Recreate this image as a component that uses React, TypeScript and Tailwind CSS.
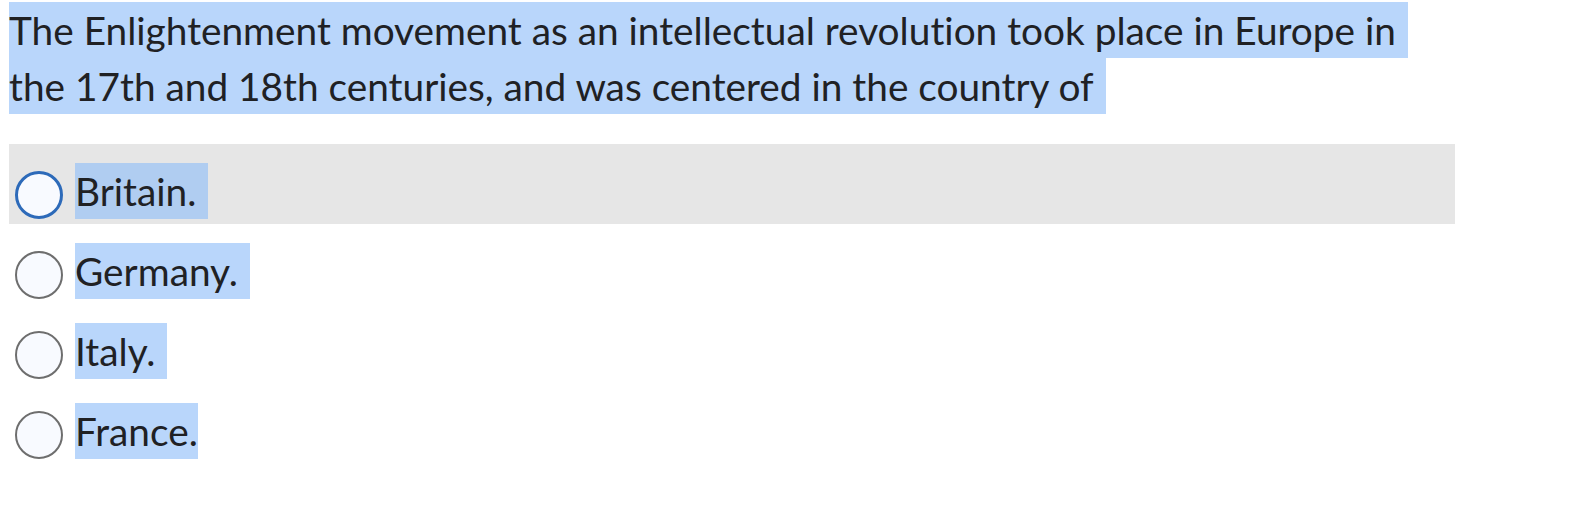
import React from "react";

type Choice = { label: string; trail: boolean; focused?: boolean };

const choices: Choice[] = [
  { label: "Britain.", trail: true, focused: true },
  { label: "Germany.", trail: true },
  { label: "Italy.", trail: true },
  { label: "France.", trail: false },
];

function Radio({ focused }: { focused?: boolean }) {
  return (
    <span
      className={
        focused
          ? "mt-[8px] block h-[48px] w-[48px] shrink-0 rounded-full border-[3px] border-[#2d6ab9] bg-[#f8faff]"
          : "mt-[8px] block h-[48px] w-[48px] shrink-0 rounded-full border-2 border-[#6e6e6e] bg-[#f8faff]"
      }
    />
  );
}

export default function App() {
  return (
    <div
      className="min-h-[506px] w-[1584px] bg-white pt-[2px] text-[#202124]"
      style={{ fontFamily: "Lato, 'Noto Sans', sans-serif", fontVariantLigatures: "none" }}
    >
      <div className="ml-[9px] text-[38.8px] leading-[56px]">
        <div className="w-fit bg-[#b9d6fb] pr-[12px]">
          The Enlightenment movement as an intellectual revolution took place in Europe in
        </div>
        <div className="w-fit bg-[#b9d6fb] pr-[12px]">
          the 17th and 18th centuries, and was centered in the country of
        </div>
      </div>

      <div className="ml-[9px] mt-[30px] flex w-[1446px] flex-col">
        {choices.map((c) => (
          <div
            key={c.label}
            className={
              c.focused
                ? "flex h-[80px] items-start gap-[12px] bg-[#e6e6e6] pl-[6px] pt-[19px]"
                : "flex h-[80px] items-start gap-[12px] pl-[6px] pt-[19px]"
            }
          >
            <Radio focused={c.focused} />
            <span
              className={
                (c.focused ? "bg-[#b0cdf1] " : "bg-[#b9d6fb] ") +
                (c.trail ? "pr-[12px] " : "") +
                "block text-[38.8px] leading-[56px]"
              }
            >
              {c.label}
            </span>
          </div>
        ))}
      </div>
    </div>
  );
}
